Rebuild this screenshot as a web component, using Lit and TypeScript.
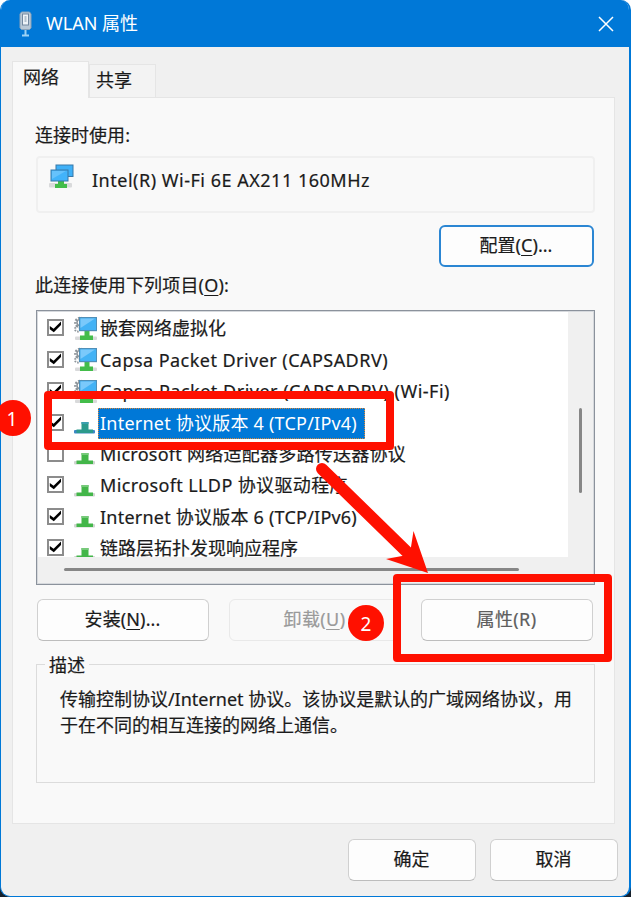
import { LitElement, html, css, svg } from "lit";
import { customElement, property } from "lit/decorators.js";

type Item = { icon: "filter" | "proto"; on: boolean; label: string; width: number; selected?: boolean };

const ITEMS: Item[] = [
  { icon: "filter", on: true, label: "嵌套网络虚拟化", width: 126 },
  { icon: "filter", on: true, label: "Capsa Packet Driver (CAPSADRV)", width: 288 },
  { icon: "filter", on: true, label: "Capsa Packet Driver (CAPSADRV) (Wi-Fi)", width: 350 },
  { icon: "proto", on: true, label: "Internet 协议版本 4 (TCP/IPv4)", width: 257, selected: true },
  { icon: "proto", on: false, label: "Microsoft 网络适配器多路传送器协议", width: 306 },
  { icon: "proto", on: true, label: "Microsoft LLDP 协议驱动程序", width: 248 },
  { icon: "proto", on: true, label: "Internet 协议版本 6 (TCP/IPv6)", width: 257 },
  { icon: "proto", on: true, label: "链路层拓扑发现响应程序", width: 198 },
];

/** One line of text whose letter spacing is tuned to a given width. */
@customElement("fit-text")
export class FitText extends LitElement {
  @property({ type: Number }) width = 0;
  @property({ type: Number }) chars = 0;
  static styles = css`
    :host { display: inline-block; white-space: nowrap; }
    .run { display: inline-block; white-space: nowrap; }
  `;
  render() {
    return html`<span class="run"><slot></slot></span>`;
  }
  firstUpdated() {
    const run = this.renderRoot.querySelector(".run") as HTMLElement;
    const count = this.chars || (this.textContent ?? "").trim().length;
    const natural = run.getBoundingClientRect().width;
    if (natural > 0 && this.width > 0) {
      this.style.letterSpacing = `${(this.width - natural) / count}px`;
      this.style.width = `${this.width}px`;
    }
  }
}

const filterIcon = svg`
  <g fill="none" stroke="#8e959b" stroke-width="2.500">
    <circle cx="7" cy="6.500" r="4.600" stroke-dasharray="1.800 1.400"/><circle cx="7" cy="6.500" r="3" stroke-width="1.500"/>
    <circle cx="4.500" cy="13" r="2.500" stroke-dasharray="1.500 1.200" stroke-width="2"/>
  </g>
  <rect x="2" y="20.500" width="22" height="3.500" rx="1" fill="#d9dadb"/>
  <path d="M11.500 15h5v4.500h3.500V24H7v-4.500h4.500z" fill="#43bd4a"/>
  <rect x="6.600" y="1.600" width="17" height="13" fill="#43b2f5" stroke="#4f8fb8" stroke-width="1.200"/>
  <path d="M7.500 2.500h14.500L7.500 12z" fill="#7ac9fb"/>`;

const protoIcon = svg`
  <rect x="1" y="20" width="21" height="3.500" rx="1" fill="#d0d5d0"/>
  <path d="M8.500 12h7v7.500H20V23H3.500v-3.500h5z" fill="#43b649"/>
  <path d="M8.500 12h7v2h-7z" fill="#76c97a"/>`;

const protoSelected = svg`
  <rect x="1" y="20" width="21" height="3.500" rx="1" fill="#3b87c4"/>
  <path d="M8.500 12h7v7.500H20V23H3.500v-3.500h5z" fill="#2b9a8c"/>
  <path d="M8.500 12h7v2h-7z" fill="#3b9fae"/>`;

@customElement("app-root")
export class AppRoot extends LitElement {
  static styles = css`
    :host { display: block; width: 631px; height: 897px; position: relative; overflow: hidden;
      background: linear-gradient(#fff 50%, #16202b 50%);
      font: 18px/26px "Noto Sans", "Noto Sans CJK SC", sans-serif; color: #1b1b1b; }
    * { box-sizing: border-box; }
    .window { width: 631px; height: 897px; background: #f0f0f0; border: solid #0078d7; border-width: 0 2px 1px 1px;
      border-radius: 10px; overflow: hidden; display: flex; flex-direction: column; }
    .title { height: 47px; flex: none; background: #0078d7; color: #fff; display: flex; align-items: center; padding: 0 14px 0 14px; }
    .title fit-text { margin: -1px 0 0 11px; flex: 1; }
    .tabs { display: flex; align-items: flex-end; padding: 14px 0 0 11px; height: 51px; flex: none; }
    .tab { border: 1px solid #e5e5e5; border-bottom: 0; height: 34px; width: 67px; padding: 2px 0 0 6px; background: #f3f3f3;
      -webkit-text-stroke: 0.2px; }
    .tab.active { width: 77px; height: 37px; background: #f9f9f9; padding: 2px 0 0 10px; position: relative; z-index: 1; }
    .page { margin: -1px 14px 0 11px; height: 727px; flex: none; background: #f9f9f9; border: 1px solid #e5e5e5; padding: 24px 19px 0 23px;
      display: flex; flex-direction: column; -webkit-text-stroke: 0.2px; }
    .page > * { flex: none; }
    .caption { margin-left: -1px; }
    u { text-decoration-thickness: 1px; text-underline-offset: 3px; }
    .adapter { margin-top: 8px; height: 57px; border: 2px solid #f0f0f0; border-radius: 4px; display: flex; padding: 5px 0 0 10px; gap: 18px; }
    .adapter fit-text { margin-top: 4px; }
    .btn { height: 42px; border: 1px solid #d0d0d0; border-bottom-color: #bdbdbd; border-radius: 6px; background: #fdfdfd;
      display: flex; align-items: center; justify-content: center; font: inherit; color: inherit; padding: 0 1px 2px 0; }
    .config { width: 155px; margin: 12px 1px 0 auto; border: 2px solid #2b86d3; }
    .items-label { margin-top: 5px; }
    .list { margin-top: 12px; height: 275px; border: 1px solid #8b929c; box-shadow: inset 0 0 0 1px #d6d9dd; background: #fff; padding: 1px;
      display: grid; grid-template: 245px 1fr / 1fr 25px; }
    .rows { overflow: hidden; padding-top: 1px; }
    .row { height: 31.45px; display: flex; align-items: center; padding-left: 9px; }
    .box { width: 17px; height: 17px; border: 2px solid #8c8c8c; background: #fff; margin: -2px 9px 0 0; display: block; }
    .ic { margin-right: 1px; flex: none; }
    .name { padding: 2px 7px 2px 2px; height: 31px; line-height: 26px; }
    .name.selected { background: #0078d7; color: #fff; outline: 1px dotted #d8893c; outline-offset: -1px; -webkit-text-stroke: 0; padding-right: 8px; }
    .vbar, .hbar { background: #f0f0f0; }
    .vbar { padding: 96px 0 0 11px; }
    .hbar { grid-column: span 2; padding: 11px 0 0 26px; }
    .vthumb { width: 3px; height: 85px; border-radius: 2px; background: #868686; }
    .hthumb { width: 455px; height: 3px; border-radius: 2px; background: #868686; }
    .actions { display: flex; gap: 20px; margin: 14px 0 0 1px; }
    .actions .btn { width: 172px; }
    .off { color: #9a9a9a; background: #f9f9f9; border-color: #e9e9e9; }
    .dim { color: #5e5e5e; }
    .group { margin-top: 23px; height: 119px; border: 1px solid #dcdcdc; padding: 0 0 0 23px; }
    .legend { width: 44px; margin: -13px 0 8px -15px; padding-left: 4px; background: #f9f9f9; }
    .line { display: flex; height: 26px; }
    .footer { display: flex; justify-content: flex-end; gap: 14px; padding: 15px 11px 0; -webkit-text-stroke: 0.2px; }
    .footer .btn { width: 128px; }
    .marks { position: absolute; inset: 0; pointer-events: none; }
    .num { font: 19px "Noto Sans", sans-serif; fill: #fff; text-anchor: middle; }
  `;

  private row(item: Item) {
    const art = item.icon === "filter" ? filterIcon : item.selected ? protoSelected : protoIcon;
    return html`<div class="row">
      <svg class="box" viewBox="0 0 13 13">${item.on ? svg`<path d="M0.800 5l3.800 2.800L12 0.500v3.600L4.800 11.300 0.800 8.300z" fill="#000"/>` : ""}</svg>
      <svg class="ic" width="24" height="26" viewBox="0 0 24 26">${art}</svg>
      <span class="name ${item.selected ? "selected" : ""}"><fit-text width=${item.width}>${item.label}</fit-text></span>
    </div>`;
  }

  render() {
    return html`
      <div class="window">
        <div class="title">
          <svg width="20" height="28" viewBox="0 0 20 28">
            <path d="M6.500 2h8l1.500 2v14l-1.500 1.500h-8L5 18V4z" fill="#b9c8d6" stroke="#8aa3ba"/>
            <rect x="7.500" y="4" width="6" height="11" fill="#eef3f8" stroke="#7288a0"/>
            <path d="M10.500 6v6" stroke="#b3c1cd" stroke-width="2"/>
            <path d="M10.500 20v5M7 25.500h7" stroke="#9cd2f5" stroke-width="2"/>
          </svg>
          <fit-text width="92">WLAN 属性</fit-text>
          <svg width="18" height="18" viewBox="0 0 18 18"><path d="M2 2l14 14M16 2L2 16" stroke="#fff" stroke-width="1.500"/></svg>
        </div>
        <div class="tabs"><div class="tab active">网络</div><div class="tab">共享</div></div>
        <div class="page">
          <div class="caption"><fit-text width="95">连接时使用:</fit-text></div>
          <div class="adapter">
            <svg width="26" height="28" viewBox="0 0 26 28">
              <rect x="1" y="20" width="23" height="4.500" rx="1" fill="#d9dadb"/>
              <rect x="8" y="2" width="17" height="11.500" fill="#3fb0f7" stroke="#3879a8"/>
              <path d="M10 17h6v4h3v4H7v-4h3z" fill="#43bd4a"/>
              <rect x="3" y="7" width="17" height="11" fill="#42b3fa" stroke="#3879a8"/>
              <path d="M4 8h14L4 16z" fill="#66c2fc"/>
            </svg>
            <fit-text width="278">Intel(R) Wi-Fi 6E AX211 160MHz</fit-text>
          </div>
          <button class="btn config"><fit-text width="73" chars="8">配置(<u>C</u>)...</fit-text></button>
          <div class="caption items-label"><fit-text width="194">此连接使用下列项目(<u>O</u>):</fit-text></div>
          <div class="list">
            <div class="rows">${ITEMS.map((i) => this.row(i))}</div>
            <div class="vbar"><div class="vthumb"></div></div>
            <div class="hbar"><div class="hthumb"></div></div>
          </div>
          <div class="actions">
            <button class="btn"><fit-text width="76">安装(<u>N</u>)...</fit-text></button>
            <button class="btn off"><fit-text width="62">卸载(<u>U</u>)</fit-text></button>
            <button class="btn dim"><fit-text width="60">属性(R)</fit-text></button>
          </div>
          <div class="group">
            <div class="legend">描述</div>
            <div class="line"><fit-text width="512">传输控制协议/Internet 协议。该协议是默认的广域网络协议，用</fit-text></div>
            <div class="line"><fit-text width="288">于在不同的相互连接的网络上通信。</fit-text></div>
          </div>
        </div>
        <div class="footer"><button class="btn">确定</button><button class="btn">取消</button></div>
      </div>
      <svg class="marks" width="631" height="897" viewBox="0 0 631 897">
        <g fill="none" stroke="#ff1000" stroke-width="8" stroke-linejoin="round">
          <rect x="48" y="395" width="342" height="51"/>
          <rect x="397" y="578" width="211" height="80"/>
        </g>
        <path d="M322 469L406 551" stroke="#ff1000" stroke-width="12" stroke-linecap="round"/>
        <path d="M428 573L386 559L402 556L411 547L413.500 531Z" fill="#ff1000"/>
        <circle cx="13" cy="418" r="18" fill="#ff1000"/>
        <circle cx="366" cy="623" r="18" fill="#ff1000"/>
        <text class="num" x="12" y="426">1</text>
        <text class="num" x="366" y="631">2</text>
      </svg>`;
  }
}
